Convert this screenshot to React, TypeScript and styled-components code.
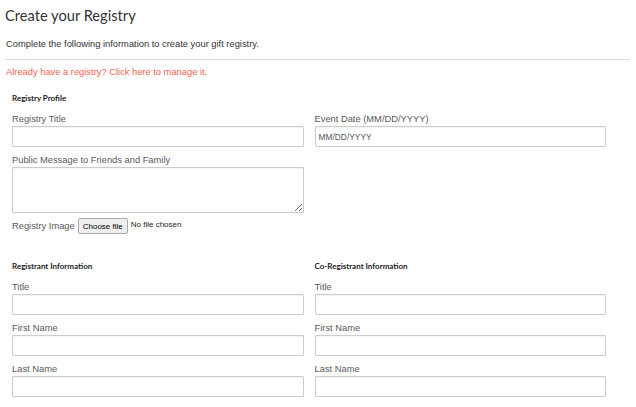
import styled, { createGlobalStyle } from "styled-components";

const GlobalStyle = createGlobalStyle`
  html, body {
    margin: 0;
    padding: 0;
    background: #ffffff;
  }
  body {
    font-family: "Liberation Sans", Arial, sans-serif;
    color: #333333;
  }
  * {
    box-sizing: border-box;
  }
`;

interface fieldProp {
    _label: string,
    _placeholder?: string
}

const Field = ({ _label, _placeholder }: fieldProp) => (
    <FieldWrapper>
        <Label>{_label}</Label>
        <TextInput type="text" placeholder={_placeholder} />
    </FieldWrapper>
);

const PERSON_FIELDS = ["Title", "First Name", "Last Name"];

const App = () => {
    return (
        <>
            <GlobalStyle />
            <PageWrapper>
                <Heading>Create your Registry</Heading>
                <Intro>Complete the following information to create your gift registry.</Intro>
                <Divider />
                <ManageLink href="#">Already have a registry? Click here to manage it.</ManageLink>

                <FormBody>
                    <SectionTitle>Registry Profile</SectionTitle>
                    <TwoColumns>
                        <Column>
                            <Field _label="Registry Title" />
                            <FieldWrapper>
                                <Label>Public Message to Friends and Family</Label>
                                <MessageArea />
                            </FieldWrapper>
                            <ImageRow>
                                <ImageLabel>Registry Image</ImageLabel>
                                <ChooseButton type="button">Choose file</ChooseButton>
                                <NoFile>No file chosen</NoFile>
                            </ImageRow>
                        </Column>
                        <Column>
                            <Field _label="Event Date (MM/DD/YYYY)" _placeholder="MM/DD/YYYY" />
                        </Column>
                    </TwoColumns>

                    <PeopleColumns>
                        <Column>
                            <SectionTitle>Registrant Information</SectionTitle>
                            {PERSON_FIELDS.map((name) => <Field key={"r" + name} _label={name} />)}
                        </Column>
                        <Column>
                            <SectionTitle>Co-Registrant Information</SectionTitle>
                            {PERSON_FIELDS.map((name) => <Field key={"c" + name} _label={name} />)}
                        </Column>
                    </PeopleColumns>
                </FormBody>
            </PageWrapper>
        </>
    )
}

const PageWrapper = styled.div`
    padding: 6px 6px 0 5px;
`

const Heading = styled.h1`
    margin: 0;
    font-family: Lato, "Liberation Sans", sans-serif;
    font-weight: 400;
    font-size: 14.67px;
    line-height: 20px;
    color: #333333;
`

const Intro = styled.p`
    margin: 12px 0 0 1px;
    font-size: 9.33px;
    line-height: 13px;
    color: #333333;
`

const Divider = styled.hr`
    margin: 8px 0 0 0;
    border: 0;
    border-top: 1px solid #dddddd;
    height: 0;
`

const ManageLink = styled.a`
    display: block;
    margin: 6px 0 0 1px;
    font-size: 9.33px;
    line-height: 13px;
    color: #f2634f;
    text-decoration: none;
`

const FormBody = styled.div`
    padding: 13px 24px 0 7px;
`

const SectionTitle = styled.div`
    font-family: Lato, "Liberation Sans", sans-serif;
    font-weight: 700;
    font-size: 8px;
    line-height: 12px;
    color: #222222;
    margin-bottom: 9px;
`

const TwoColumns = styled.div`
    display: grid;
    grid-template-columns: 1fr 1fr;
    column-gap: 11px;
`

const PeopleColumns = styled(TwoColumns)`
    margin-top: 26px;
`

const Column = styled.div`
    display: flex;
    flex-direction: column;
    min-width: 0;
`

const FieldWrapper = styled.div`
    display: flex;
    flex-direction: column;
    margin-bottom: 7px;
`

const Label = styled.label`
    font-size: 9.33px;
    line-height: 13px;
    color: #5a5a5a;
`

const TextInput = styled.input`
    display: block;
    width: 100%;
    height: 21px;
    margin: 0;
    padding: 1px 3px;
    border: 1px solid #cccccc;
    border-radius: 1px;
    box-shadow: inset 0 1px 1px rgba(0, 0, 0, 0.05);
    font-family: "Liberation Sans", Arial, sans-serif;
    font-size: 8.4px;
    color: #333333;
    background: #ffffff;

    &::placeholder {
        color: #555555;
        opacity: 1;
    }
`

const MessageArea = styled.textarea`
    display: block;
    width: 100%;
    height: 46px;
    margin: 0;
    padding: 2px 3px;
    border: 1px solid #cccccc;
    border-radius: 1px;
    box-shadow: inset 0 1px 1px rgba(0, 0, 0, 0.05);
    font-family: "Liberation Sans", Arial, sans-serif;
    font-size: 9.33px;
    resize: both;
`

const ImageRow = styled.div`
    display: flex;
    align-items: center;
    column-gap: 3px;
    margin-top: -2px;
`

const ImageLabel = styled.span`
    font-size: 9.33px;
    line-height: 13px;
    color: #5a5a5a;
`

const ChooseButton = styled.button`
    width: 50px;
    height: 16px;
    padding: 0;
    margin: 0;
    border: 1px solid #a9a9a9;
    border-radius: 2px;
    background: #efefef;
    font-family: "Liberation Sans", Arial, sans-serif;
    font-size: 8px;
    color: #000000;
`

const NoFile = styled.span`
    font-size: 8px;
    line-height: 10px;
    color: #222222;
    margin-bottom: 3px;
`

export default App;
